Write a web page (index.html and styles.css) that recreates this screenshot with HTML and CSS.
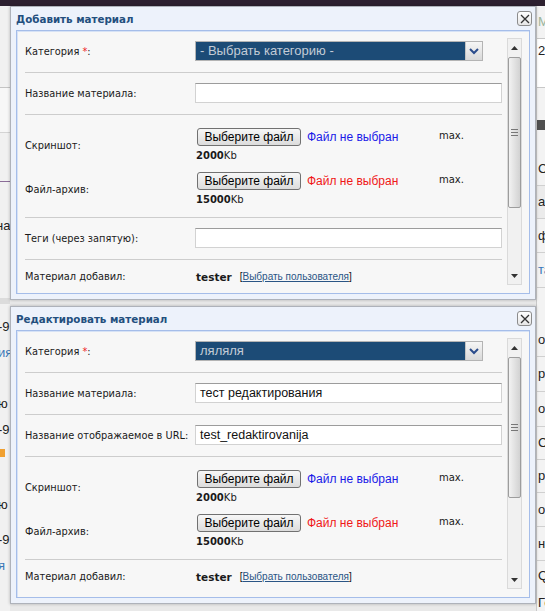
FILE: index.html
```html
<!DOCTYPE html>
<html lang="ru">
<head>
<meta charset="utf-8">
<title>Материалы</title>
<link rel="stylesheet" href="styles.css">
</head>
<body>
<div class="topbar"></div>
<div class="page">
  <div class="strip-left">
    <div class="sl-a"></div>
    <div class="sl-b"></div>
    <div class="sl-c"></div>
    <div class="sl-d"><span class="frag">на</span></div>
    <div class="sl-gap"></div>
    <div class="sl-list">
      <span class="frag f-a">-9</span>
      <span class="frag f-b blue">ия</span>
      <span class="frag f-c">ю</span>
      <span class="frag f-d">-9</span>
      <span class="orange"></span>
      <span class="frag f-e">ю</span>
      <span class="frag f-f">-9</span>
      <span class="frag f-g blue">я</span>
    </div>
  </div>
  <div class="strip-mid"></div>
  <div class="strip-right">
    <div class="sr-item h32"><span class="frag green">М</span></div>
    <div class="sr-box"><span class="frag">2</span></div>
    <div class="sr-item h32"></div>
    <div class="sr-dark"></div>
    <div class="sr-item h56 bottomline"><span class="frag">С</span></div>
    <div class="sr-item h33 bottomline grey"><span class="frag">а</span></div>
    <div class="sr-item h34 bottomline"><span class="frag">ф</span></div>
    <div class="sr-item h35 bottomline"><span class="frag blue">та</span></div>
    <div class="sr-item h35"></div>
    <div class="sr-item h34 bottomline"><span class="frag">о</span></div>
    <div class="sr-item h35 bottomline"><span class="frag">р</span></div>
    <div class="sr-item h35 bottomline"><span class="frag">от</span></div>
    <div class="sr-item h33 bottomline"><span class="frag">С</span></div>
    <div class="sr-item h33 bottomline"><span class="frag">р</span></div>
    <div class="sr-item h34 bottomline"><span class="frag">ос</span></div>
    <div class="sr-item h34 bottomline"><span class="frag">нл</span></div>
    <div class="sr-item h30"><span class="frag">Q</span></div>
    <div class="sr-item h19 last"><span class="frag">Гос</span></div>
  </div>
</div>

<div class="dialog d1">
  <div class="dlg-title">
    <span class="dlg-name">Добавить материал</span>
    <span class="close"><svg width="10" height="10" viewBox="0 0 10 10"><path d="M1 1 L9 9 M9 1 L1 9" stroke="#333" stroke-width="1.3" fill="none"/></svg></span>
  </div>
  <div class="dlg-body">
    <div class="form">
      <div class="row">
        <div class="label">Категория <span class="req">*</span>:</div>
        <div class="select"><span class="sel-text">- Выбрать категорию -</span><span class="sel-btn"><svg width="10" height="7" viewBox="0 0 10 7"><path d="M1 1 L5 5 L9 1" stroke="#2b4c8c" stroke-width="2" fill="none"/></svg></span></div>
      </div>
      <div class="row">
        <div class="label">Название материала:</div>
        <div class="input"></div>
      </div>
      <div class="row file-row">
        <div class="file-sub">
          <div class="label">Скриншот:</div>
          <div class="file-val">
            <div class="file-line"><div class="file-main"><span class="fbtn">Выберите файл</span><span class="fstatus st-blue">Файл не выбран</span></div><span class="max">max.</span></div>
            <div class="kb"><b>2000</b>Kb</div>
          </div>
        </div>
        <div class="file-sub">
          <div class="label">Файл-архив:</div>
          <div class="file-val">
            <div class="file-line"><div class="file-main"><span class="fbtn">Выберите файл</span><span class="fstatus st-red">Файл не выбран</span></div><span class="max">max.</span></div>
            <div class="kb"><b>15000</b>Kb</div>
          </div>
        </div>
      </div>
      <div class="row">
        <div class="label">Теги (через запятую):</div>
        <div class="input"></div>
      </div>
      <div class="row text-row">
        <div class="label">Материал добавил:</div>
        <div class="author"><b>tester</b><span class="pick">[<span class="pick-link">Выбрать пользователя</span>]</span></div>
      </div>
    </div>
    <div class="scroll">
      <div class="sc-up"><svg width="7" height="4" viewBox="0 0 7 4"><path d="M0 4 L3.5 0 L7 4 Z" fill="#333"/></svg></div>
      <div class="sc-track">
        <div class="sc-thumb t1"><span class="grip"></span></div>
      </div>
      <div class="sc-down"><svg width="7" height="4" viewBox="0 0 7 4"><path d="M0 0 L3.5 4 L7 0 Z" fill="#333"/></svg></div>
    </div>
  </div>
</div>

<div class="dialog d2">
  <div class="dlg-title">
    <span class="dlg-name">Редактировать материал</span>
    <span class="close"><svg width="10" height="10" viewBox="0 0 10 10"><path d="M1 1 L9 9 M9 1 L1 9" stroke="#333" stroke-width="1.3" fill="none"/></svg></span>
  </div>
  <div class="dlg-body">
    <div class="form">
      <div class="row">
        <div class="label">Категория <span class="req">*</span>:</div>
        <div class="select"><span class="sel-text">ляляля</span><span class="sel-btn"><svg width="10" height="7" viewBox="0 0 10 7"><path d="M1 1 L5 5 L9 1" stroke="#2b4c8c" stroke-width="2" fill="none"/></svg></span></div>
      </div>
      <div class="row">
        <div class="label">Название материала:</div>
        <div class="input">тест редактирования</div>
      </div>
      <div class="row">
        <div class="label">Название отображаемое в URL:</div>
        <div class="input">test_redaktirovanija</div>
      </div>
      <div class="row file-row">
        <div class="file-sub">
          <div class="label">Скриншот:</div>
          <div class="file-val">
            <div class="file-line"><div class="file-main"><span class="fbtn">Выберите файл</span><span class="fstatus st-blue">Файл не выбран</span></div><span class="max">max.</span></div>
            <div class="kb"><b>2000</b>Kb</div>
          </div>
        </div>
        <div class="file-sub">
          <div class="label">Файл-архив:</div>
          <div class="file-val">
            <div class="file-line"><div class="file-main"><span class="fbtn">Выберите файл</span><span class="fstatus st-red">Файл не выбран</span></div><span class="max">max.</span></div>
            <div class="kb"><b>15000</b>Kb</div>
          </div>
        </div>
      </div>
      <div class="row text-row">
        <div class="label">Материал добавил:</div>
        <div class="author"><b>tester</b><span class="pick">[<span class="pick-link">Выбрать пользователя</span>]</span></div>
      </div>
    </div>
    <div class="scroll">
      <div class="sc-up"><svg width="7" height="4" viewBox="0 0 7 4"><path d="M0 4 L3.5 0 L7 4 Z" fill="#333"/></svg></div>
      <div class="sc-track">
        <div class="sc-thumb t2"><span class="grip"></span></div>
      </div>
      <div class="sc-down"><svg width="7" height="4" viewBox="0 0 7 4"><path d="M0 0 L3.5 4 L7 0 Z" fill="#333"/></svg></div>
    </div>
  </div>
</div>
</body>
</html>
```

FILE: styles.css
```css
* { box-sizing: border-box; }
html, body { margin: 0; padding: 0; }
body {
  width: 545px;
  height: 611px;
  overflow: hidden;
  position: relative;
  background: #e9e9e9;
  font-family: "DejaVu Sans", sans-serif;
  font-size: 10px;
  color: #1a1a1a;
}

/* ---------- background page fragments ---------- */
.topbar { height: 6px; background: #2d2030; }
.page { display: flex; height: 605px; }
.strip-left { width: 10px; display: flex; flex-direction: column; overflow: hidden; background: #f1f1f1; }
.strip-mid { flex: 1; }
.strip-right { width: 9px; display: flex; flex-direction: column; overflow: hidden; background: #f3f3f3; border-left: 1px solid #c9c9c9; }
.frag { font-family: "Liberation Sans", sans-serif; font-size: 13px; color: #222; white-space: nowrap; line-height: 14px; }
.frag.blue { color: #3a78b8; }
.frag.green { color: #9bb39b; }
.sl-a { height: 82px; flex: none; border-bottom: 1px solid #c4c4c4; }
.sl-b { height: 45px; flex: none; border-bottom: 1px solid #d4d4d4; background: #f7f7f7; }
.sl-c { height: 49px; flex: none; border-bottom: 1px solid #8b6d98; }
.sl-d { height: 116px; flex: none; display: flex; align-items: flex-start; margin-left: -4px; padding-top: 37px; }
.sl-gap { height: 6px; flex: none; background: #dcdcdc; }
.sl-list { flex: 1; display: flex; flex-direction: column; margin-left: -2px; }
.sl-list .frag { display: block; height: 26px; }
.f-a { margin-top: 16px; }
.f-c { margin-top: 25px; }
.orange { display: block; width: 5px; height: 8px; background: #f0a030; margin: 0 0 0 2px; }
.f-e { margin-top: 41px; }
.f-f { margin-top: 9px; }

.sr-item { display: flex; align-items: center; padding-left: 1px; flex: none; }
.h12 { height: 12px; } .h19 { height: 19px; } .h30 { height: 30px; } .h32 { height: 32px; }
.h33 { height: 33px; } .h34 { height: 34px; } .h35 { height: 35px; } .h56 { height: 56px; padding-top: 22px; }
.last { align-items: flex-end; }
.bottomline { border-bottom: 1px solid #d0d0d0; }
.grey { background: #ebebeb; }
.sr-box { height: 50px; flex: none; border-top: 1px solid #c8c8c8; border-bottom: 1px solid #c8c8c8; background: #fff; display: flex; align-items: flex-start; padding: 5px 0 0 1px; }
.sr-dark { height: 10px; flex: none; background: #505050; }

/* ---------- dialogs ---------- */
.dialog {
  position: absolute;
  left: 10px;
  width: 526px;
  background: #edf2fb;
  border: 1px solid #aeb2ba;
  box-shadow: 0 0 3px rgba(0, 0, 0, 0.25);
  display: flex;
  flex-direction: column;
}
.d1 { top: 6px; height: 294px; }
.d2 { top: 306px; height: 298px; }

.dlg-title {
  height: 23px;
  flex: none;
  display: flex;
  align-items: center;
  justify-content: space-between;
  padding: 0 3px 0 5px;
}
.dlg-name { font-weight: bold; font-size: 10.3px; color: #234f7e; }
.close {
  width: 15px;
  height: 15px;
  border: 1px solid #8c8c8c;
  border-radius: 3px;
  background: linear-gradient(#ffffff, #e6e6e6);
  display: flex;
  align-items: center;
  justify-content: center;
}

.dlg-body {
  flex: 1;
  margin: 0 5px 5px;
  border: 1px solid #a5bde9;
  box-shadow: inset 1px 1px 0 #d6e2f6;
  background: #f7f7f7;
  display: flex;
  overflow: hidden;
  padding: 0 7px 0 8px;
}
.form { flex: 1; min-width: 0; padding-top: 10px; }

.row {
  display: flex;
  align-items: center;
  padding: 10px 0 11px;
  border-top: 1px solid #cdcdcd;
}
.row:first-child { border-top: 0; padding-top: 0; }
.label { width: 170px; flex: none; white-space: nowrap; font-size: 9.8px; }
.req { color: #ee2222; }

.select {
  width: 288px;
  height: 20px;
  border: 1px solid #b4b4b4;
  background: #1c4b76;
  display: flex;
  align-items: stretch;
}
.sel-text {
  flex: 1;
  font-family: "Liberation Sans", sans-serif;
  font-size: 13px;
  line-height: 18px;
  color: #c3ccd6;
  padding-left: 4px;
}
.sel-btn {
  width: 17px;
  background: linear-gradient(#f6f6f6, #d9d9d9);
  border-left: 1px solid #c4c4c4;
  display: flex;
  align-items: center;
  justify-content: center;
}

.input {
  width: 307px;
  height: 20px;
  background: #fff;
  border: 1px solid #d2d2d2;
  border-top-color: #9c9c9c;
  font-family: "Liberation Sans", sans-serif;
  font-size: 12.5px;
  line-height: 18px;
  padding-left: 4px;
  color: #111;
}

.file-row { flex-direction: column; align-items: stretch; padding: 13px 0 10px; gap: 9px; }
.file-sub { display: flex; align-items: center; height: 35px; }
.file-val { display: flex; flex-direction: column; }
.file-line { display: flex; align-items: center; height: 18px; }
.file-main { width: 244px; display: flex; align-items: center; padding-left: 2px; }
.fbtn {
  width: 104px;
  height: 18px;
  border: 1px solid #717171;
  border-radius: 3px;
  background: linear-gradient(#f7f7f7, #dcdcdc);
  font-family: "Liberation Sans", sans-serif;
  font-size: 12px;
  line-height: 16px;
  text-align: center;
  color: #000;
}
.fstatus { font-family: "Liberation Sans", sans-serif; font-size: 12px; margin-left: 6px; }
.st-blue { color: #1a1ae8; }
.st-red { color: #f01818; }
.max { font-size: 10px; margin-top: -3px; }
.kb { height: 14px; line-height: 14px; margin-top: 3px; padding-left: 1px; font-size: 10px; }
.kb b { font-weight: bold; }

.text-row { padding: 10px 0 10px; line-height: 14px; }
.author { display: flex; align-items: center; padding-left: 1px; }
.author b { font-size: 10.5px; margin-right: 8px; }
.pick { font-family: "Liberation Sans", sans-serif; font-size: 10px; color: #111; }
.pick-link { color: #2a5585; text-decoration: underline; }

/* ---------- scrollbar ---------- */
.scroll {
  width: 15px;
  flex: none;
  margin: 7px 0 8px 5px;
  display: flex;
  flex-direction: column;
  background: #f1f1f1;
  border: 1px solid #dadada;
}
.sc-up, .sc-down { height: 17px; flex: none; display: flex; align-items: center; justify-content: center; }
.sc-track { flex: 1; }
.sc-thumb {
  margin: 1px 0 0 0;
  border: 1px solid #9d9d9d;
  border-radius: 2px;
  background: linear-gradient(90deg, #f2f2f2, #d2d2d2);
  display: flex;
  align-items: center;
  justify-content: center;
}
.t1 { height: 151px; }
.t2 { height: 141px; }
.grip {
  width: 7px;
  height: 7px;
  border-top: 1px solid #777;
  border-bottom: 1px solid #777;
  position: relative;
}
.grip::after {
  content: "";
  position: absolute;
  left: 0;
  right: 0;
  top: 2px;
  border-top: 1px solid #777;
}
```
